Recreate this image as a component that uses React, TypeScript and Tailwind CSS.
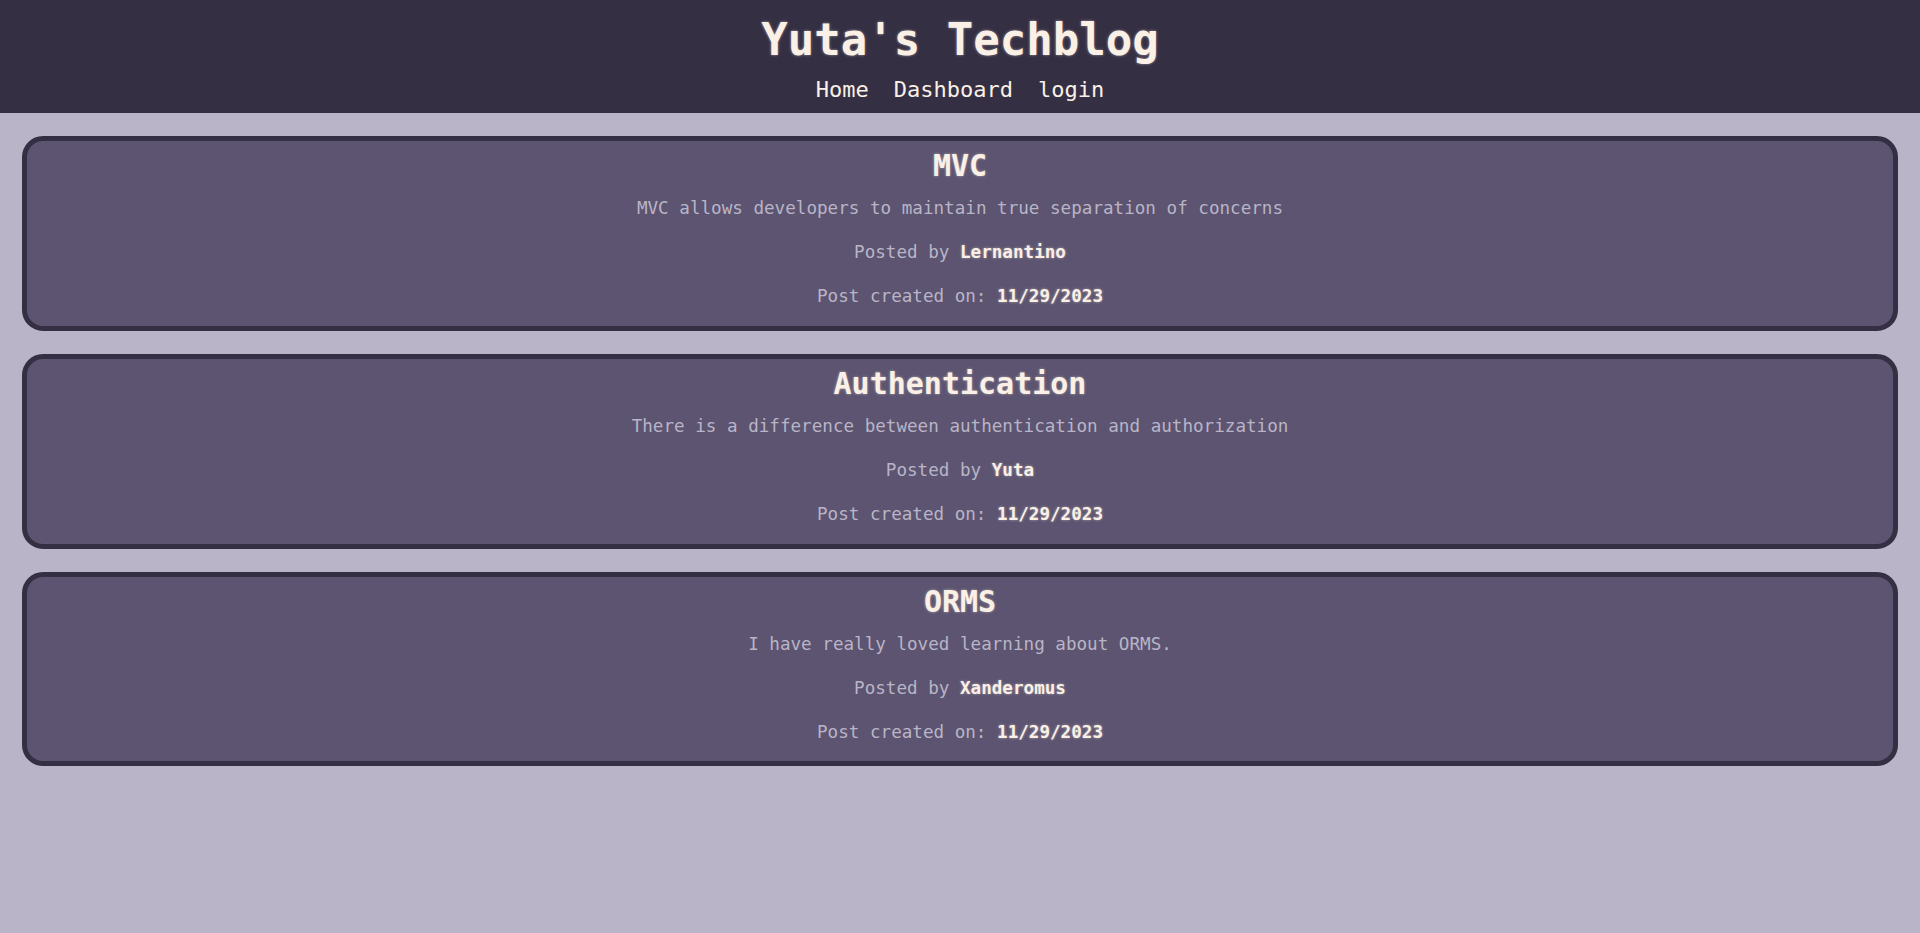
const posts = [
  {
    title: "MVC",
    body: "MVC allows developers to maintain true separation of concerns",
    author: "Lernantino",
    date: "11/29/2023",
  },
  {
    title: "Authentication",
    body: "There is a difference between authentication and authorization",
    author: "Yuta",
    date: "11/29/2023",
  },
  {
    title: "ORMS",
    body: "I have really loved learning about ORMS.",
    author: "Xanderomus",
    date: "11/29/2023",
  },
];

const glow = "[text-shadow:0_0_3px_rgba(250,240,230,0.5)]";

function PostCard({ post }: { post: (typeof posts)[number] }) {
  return (
    <article className="border-[5px] border-[#352f44] bg-[#5c5470] rounded-[21px] pt-[7px] pb-[16px] text-center">
      <h2 className={`text-[30px] leading-[36px] font-bold text-[#faf0e6] ${glow}`}>{post.title}</h2>
      <p className="mt-[11px] text-[17.6px] leading-[26.4px] text-[#b9b4c7]">{post.body}</p>
      <p className="mt-[18px] text-[17.6px] leading-[26.4px] text-[#b9b4c7]">
        Posted by <span className={`font-bold text-[#faf0e6] ${glow}`}>{post.author}</span>
      </p>
      <p className="mt-[17.6px] text-[17.6px] leading-[26.4px] text-[#b9b4c7]">
        Post created on: <span className={`font-bold text-[#faf0e6] ${glow}`}>{post.date}</span>
      </p>
    </article>
  );
}

export default function App() {
  return (
    <div className="min-h-screen bg-[#b9b4c7] font-['DejaVu_Sans_Mono',monospace]">
      <header className="h-[113px] bg-[#352f44] pt-[18px] text-center">
        <h1 className={`text-[44px] leading-[44px] font-bold text-[#faf0e6] ${glow}`}>Yuta's Techblog</h1>
        <nav className="mt-[11px] flex justify-center gap-[25px] text-[22px] leading-[33px] text-[#faf0e6]">
          <a href="#">Home</a>
          <a href="#">Dashboard</a>
          <a href="#">login</a>
        </nav>
      </header>

      <main className="mx-[22px] pt-[23px] flex flex-col gap-[23px]">
        {posts.map((post) => (
          <PostCard key={post.title} post={post} />
        ))}
      </main>
    </div>
  );
}
